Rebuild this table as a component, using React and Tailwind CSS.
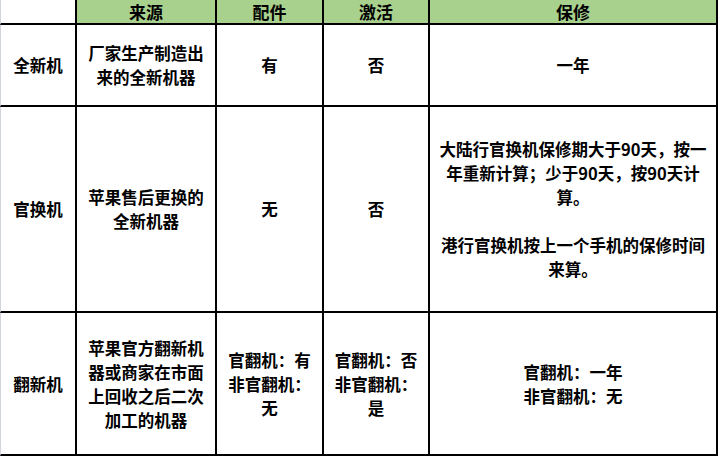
import React from "react";

const rows = [
    {
        name: "全新机",
        source: "厂家生产制造出来的全新机器",
        parts: ["有"],
        active: ["否"],
        warranty: [["一年"]],
        h: "h-[82px]",
    },
    {
        name: "官换机",
        source: "苹果售后更换的全新机器",
        parts: ["无"],
        active: ["否"],
        warranty: [
            ["大陆行官换机保修期大于90天，按一年重新计算；少于90天，按90天计算。"],
            ["港行官换机按上一个手机的保修时间来算。"],
        ],
        h: "h-[206px]",
    },
    {
        name: "翻新机",
        source: "苹果官方翻新机器或商家在市面上回收之后二次加工的机器",
        parts: ["官翻机：有", "非官翻机：无"],
        active: ["官翻机：否", "非官翻机：是"],
        warranty: [["官翻机：一年", "非官翻机：无"]],
        h: "h-[143px]",
    },
];

const cell = "flex items-center justify-center text-center border-r-2 border-b-2 border-black";

const App = () => {
    return (
        <div
            className="w-[720px] h-[458px] bg-white text-black font-bold text-[16.5px] leading-[24px]"
            style={{ fontFamily: '"Noto Sans CJK SC", "Noto Sans", sans-serif' }}
        >
            <div className="grid grid-cols-[77px_140px_107px_106px_288px] w-[718px]">
                {/* header */}
                <div className="h-[25px] border-l border-l-gray-300 border-r-2 border-b-2 border-black bg-white" />
                {["来源", "配件", "激活", "保修"].map((t) => (
                    <div key={t} className={`${cell} h-[25px] bg-[#a9d18e] text-[17px] leading-[20px]`}>
                        {t}
                    </div>
                ))}

                {rows.map((r) => (
                    <React.Fragment key={r.name}>
                        <div className={`${cell} ${r.h} border-l border-l-gray-300`}>{r.name}</div>
                        <div className={`${cell} ${r.h} px-[10px]`}>{r.source}</div>
                        <div className={`${cell} ${r.h} px-[7px]`}>
                            <div>
                                {r.parts.map((p) => (
                                    <div key={p}>{p}</div>
                                ))}
                            </div>
                        </div>
                        <div className={`${cell} ${r.h} px-[7px]`}>
                            <div>
                                {r.active.map((p) => (
                                    <div key={p}>{p}</div>
                                ))}
                            </div>
                        </div>
                        <div className={`${cell} ${r.h} px-[5px]`}>
                            <div className="flex flex-col gap-[24px]">
                                {r.warranty.map((para, i) => (
                                    <div key={i}>
                                        {para.map((line) => (
                                            <div key={line}>{line}</div>
                                        ))}
                                    </div>
                                ))}
                            </div>
                        </div>
                    </React.Fragment>
                ))}
            </div>
        </div>
    );
};

export default App;
